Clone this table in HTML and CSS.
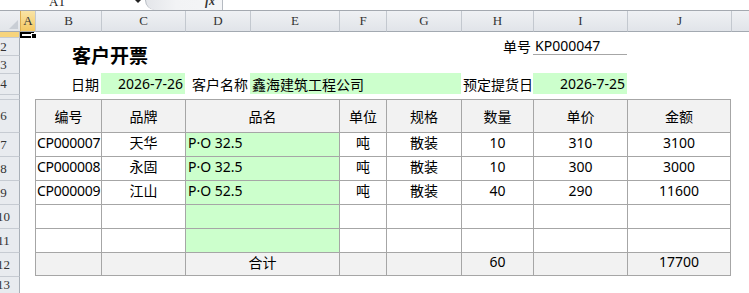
FILE: index.html
```html
<!DOCTYPE html>
<html lang="zh">
<head>
<meta charset="utf-8">
<title>客户开票</title>
<link rel="stylesheet" href="styles.css">
</head>
<body>
<div class="fbar">
  <div class="namebox"><span>A1</span></div>
  <div class="nb-drop"><i class="tri"></i></div>
  <div class="fxbox"><span class="fx">fx</span></div>
  <div class="finput"></div>
</div>
<div class="sheet">
  <div class="corner"><i class="ctri"></i></div>
  <div class="ch cA sel">A</div>
  <div class="ch cB">B</div>
  <div class="ch cC">C</div>
  <div class="ch cD">D</div>
  <div class="ch cE">E</div>
  <div class="ch cF">F</div>
  <div class="ch cG">G</div>
  <div class="ch cH">H</div>
  <div class="ch cI">I</div>
  <div class="ch cJ">J</div>
  <div class="ch cK"></div>

  <div class="rh r1 sel"><span>1</span></div>
  <div class="rh r2"><span>2</span></div>
  <div class="rh r3"><span>3</span></div>
  <div class="rh r4"><span>4</span></div>
  <div class="rh r5"><span>5</span></div>
  <div class="rh r6"><span>6</span></div>
  <div class="rh r7"><span>7</span></div>
  <div class="rh r8"><span>8</span></div>
  <div class="rh r9"><span>9</span></div>
  <div class="rh r10"><span>10</span></div>
  <div class="rh r11"><span>11</span></div>
  <div class="rh r12"><span>12</span></div>
  <div class="rh r13"><span>13</span></div>

  <div class="cell title cBC r23">客户开票</div>
  <div class="cell rgt cH r2">单号</div>
  <div class="cell lft uline cI r2">KP000047</div>

  <div class="cell rgt cB r4">日期</div>
  <div class="cell rgt grn cC r4">2026-7-26</div>
  <div class="cell rgt cD r4">客户名称</div>
  <div class="cell lft grn cEG r4">鑫海建筑工程公司</div>
  <div class="cell lft cH r4">预定提货日</div>
  <div class="cell rgt grn cI r4">2026-7-25</div>

  <div class="td th cB r6">编号</div>
  <div class="td th cC r6">品牌</div>
  <div class="td th cDE r6">品名</div>
  <div class="td th cF r6">单位</div>
  <div class="td th cG r6">规格</div>
  <div class="td th cH r6">数量</div>
  <div class="td th cI r6">单价</div>
  <div class="td th last cJ r6">金额</div>

  <div class="td dl code cB r7">CP000007</div>
  <div class="td dc cC r7">天华</div>
  <div class="td dl grn cDE r7">P·O 32.5</div>
  <div class="td dc cF r7">吨</div>
  <div class="td dc cG r7">散装</div>
  <div class="td dc cH r7">10</div>
  <div class="td dc cI r7">310</div>
  <div class="td dc last cJ r7">3100</div>

  <div class="td dl code cB r8">CP000008</div>
  <div class="td dc cC r8">永固</div>
  <div class="td dl grn cDE r8">P·O 32.5</div>
  <div class="td dc cF r8">吨</div>
  <div class="td dc cG r8">散装</div>
  <div class="td dc cH r8">10</div>
  <div class="td dc cI r8">300</div>
  <div class="td dc last cJ r8">3000</div>

  <div class="td dl code cB r9">CP000009</div>
  <div class="td dc cC r9">江山</div>
  <div class="td dl grn cDE r9">P·O 52.5</div>
  <div class="td dc cF r9">吨</div>
  <div class="td dc cG r9">散装</div>
  <div class="td dc cH r9">40</div>
  <div class="td dc cI r9">290</div>
  <div class="td dc last cJ r9">11600</div>

  <div class="td cB r10"></div>
  <div class="td cC r10"></div>
  <div class="td grn cDE r10"></div>
  <div class="td cF r10"></div>
  <div class="td cG r10"></div>
  <div class="td cH r10"></div>
  <div class="td cI r10"></div>
  <div class="td last cJ r10"></div>

  <div class="td cB r11"></div>
  <div class="td cC r11"></div>
  <div class="td grn cDE r11"></div>
  <div class="td cF r11"></div>
  <div class="td cG r11"></div>
  <div class="td cH r11"></div>
  <div class="td cI r11"></div>
  <div class="td last cJ r11"></div>

  <div class="td tot bot cB r12"></div>
  <div class="td tot bot cC r12"></div>
  <div class="td tot bot dc cDE r12">合计</div>
  <div class="td tot bot cF r12"></div>
  <div class="td tot bot cG r12"></div>
  <div class="td tot bot dc cH r12">60</div>
  <div class="td tot bot cI r12"></div>
  <div class="td tot bot dc last cJ r12">17700</div>

  <div class="selbox"><i class="handle"></i></div>
</div>
</body>
</html>
```
FILE: styles.css
```css
* { box-sizing: border-box; margin: 0; padding: 0; }
html, body { width: 749px; height: 293px; overflow: hidden; background: #fff; }
body { font-family: "Noto Sans", "Noto Sans CJK SC", sans-serif; font-size: 14px; color: #000; }

/* formula bar */
.fbar { display: flex; height: 11px; border-bottom: 1px solid #a4a9b0; overflow: hidden; background: #fff; }
.namebox { width: 130px; padding-left: 49px; font-family: "Liberation Serif", serif; font-size: 13px; color: #222; }
.namebox span { display: block; line-height: 13px; margin-top: -5px; }
.nb-drop { width: 15px; display: flex; justify-content: center; }
.tri { display: block; width: 0; height: 0; border-top: 3px solid #222; border-left: 3px solid transparent; border-right: 3px solid transparent; }
.fxbox { width: 77px; background: linear-gradient(to right, #e4e6ea, #f2f3f5 40%, #f4f5f7); border-left: 1px solid #b5bac1; border-bottom-left-radius: 10px; display: flex; justify-content: flex-end; padding-right: 7px; }
.fx { font-family: "Liberation Serif", serif; font-style: italic; font-weight: bold; font-size: 12px; line-height: 12px; margin-top: -5px; color: #333; }
.finput { flex: 1; border-left: 1px solid #b5bac1; background: #fff; }

/* sheet grid */
.sheet { position: relative; display: grid; height: 282px;
  grid-template-columns: 20px 15px 66px 84px 65px 89px 47px 75px 72px 94px 104px 1fr;
  grid-template-rows: 21px 5px 18px 18px 21px 5px 33px repeat(6, 24px) 1fr; }

.corner { grid-column: 1; grid-row: 1; position: relative; background: linear-gradient(#eef0f3, #e2e5e9); border-bottom: 1px solid #a3a9b1; }
.ctri { position: absolute; right: 2px; bottom: 2px; width: 0; height: 0; border-left: 9px solid transparent; border-bottom: 9px solid #c9ced5; }

.ch { grid-row: 1; display: flex; align-items: center; justify-content: center; background: linear-gradient(#eff1f4, #e1e4e9); border-left: 1px solid #c3c8cf; border-bottom: 1px solid #a3a9b1; font-family: "Liberation Serif", serif; font-size: 13px; color: #333; }
.ch.sel { background: linear-gradient(#f9e4a6, #f4c862); border-left-color: #dcae52; }

.rh { grid-column: 1; display: flex; align-items: center; overflow: hidden; background: #e8ebef; border-top: 1px solid #c6cbd2; border-right: 1px solid #a9b0b8; font-family: "Liberation Serif", serif; font-size: 13px; color: #333; }
.rh span { display: block; flex: none; width: 33px; margin-left: -13px; text-align: center; line-height: 14px; }
.rh.sel { background: #f7d47c; border-top: none; }
.rh.sel span { margin-top: -13px; }
.rh.r5 span { margin-top: 14px; }

/* placement */
.cA { grid-column: 2; } .cB { grid-column: 3; } .cC { grid-column: 4; } .cD { grid-column: 5; }
.cE { grid-column: 6; } .cF { grid-column: 7; } .cG { grid-column: 8; } .cH { grid-column: 9; }
.cI { grid-column: 10; } .cJ { grid-column: 11; } .cK { grid-column: 12; }
.cBC { grid-column: 3 / 5; } .cDE { grid-column: 5 / 7; } .cEG { grid-column: 6 / 9; }
.r1 { grid-row: 2; } .r2 { grid-row: 3; } .r3 { grid-row: 4; } .r4 { grid-row: 5; } .r5 { grid-row: 6; }
.r6 { grid-row: 7; } .r7 { grid-row: 8; } .r8 { grid-row: 9; } .r9 { grid-row: 10; } .r10 { grid-row: 11; }
.r11 { grid-row: 12; } .r12 { grid-row: 13; } .r13 { grid-row: 14; }
.r23 { grid-row: 3 / 5; }

/* cells */
.cell, .td { display: flex; align-items: center; overflow: hidden; white-space: nowrap; min-width: 0; }
.title { justify-content: center; font-size: 19px; font-weight: bold; }
.rgt { justify-content: flex-end; padding-right: 2px; }
.lft { justify-content: flex-start; padding-left: 2px; }
.uline { border-bottom: 1px solid #a6a6a6; }
.grn { background: #ccffcc; }

.td { border-left: 1px solid #a6a6a6; border-top: 1px solid #a6a6a6; }
.td.last { border-right: 1px solid #a6a6a6; }
.td.bot { border-bottom: 1px solid #a6a6a6; }
.th { justify-content: center; background: #f2f2f2; }
.tot { background: #f2f2f2; }
.dc { justify-content: center; padding-bottom: 5px; }
.dl { justify-content: flex-start; padding-left: 2px; padding-bottom: 5px; }
.code { padding-left: 1px; letter-spacing: -0.25px; }

/* active-cell outline overlay */
.selbox { position: absolute; left: 20px; top: 21px; width: 14px; height: 6px; border: 2px solid #000; }
.handle { position: absolute; left: 9px; top: -1px; width: 6px; height: 6px; background: #000; border: 1px solid #fff; }
```
